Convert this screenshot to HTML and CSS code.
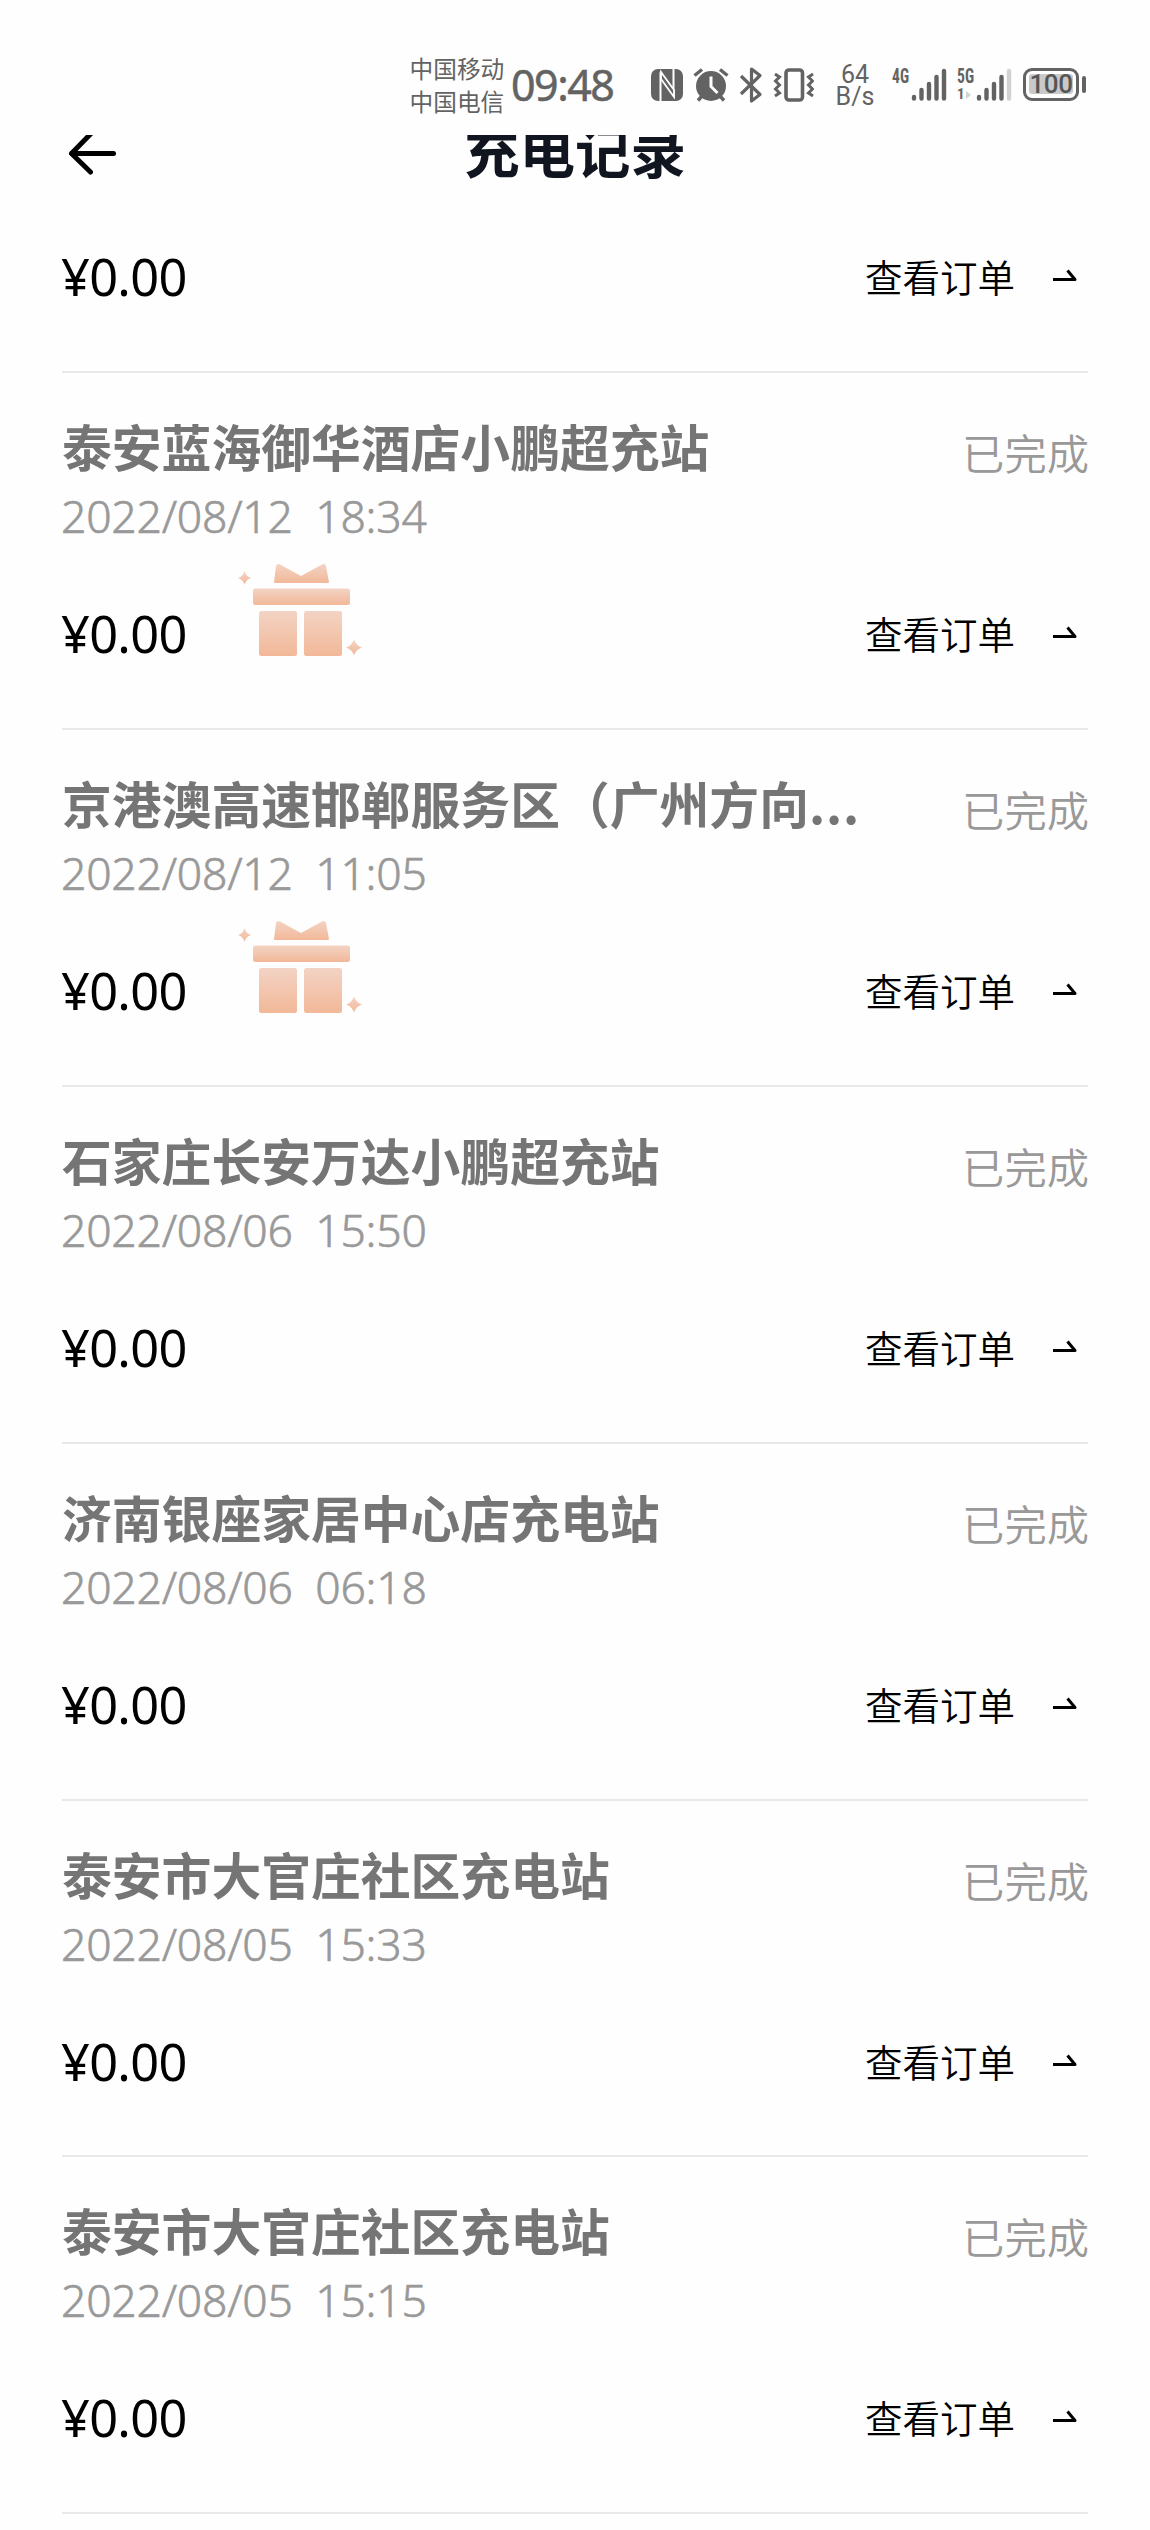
FILE: index.html
```html
<!DOCTYPE html>
<html lang="zh-CN">
<head>
<meta charset="utf-8">
<title>充电记录</title>
<link rel="stylesheet" href="styles.css">
</head>
<body>
<svg class="defs" width="0" height="0" aria-hidden="true">
  <defs>
    <linearGradient id="peach" x1="0" y1="0" x2="0" y2="1">
      <stop offset="0" stop-color="#f3d3c4"/>
      <stop offset="1" stop-color="#f2b898"/>
    </linearGradient>
    <symbol id="gift" viewBox="0 0 128 98">
      <g fill="url(#peach)">
        <path d="M40 6Q41 3 44 4.500L65 16L86 4.500Q89 3 90 6L93 22Q93 23 92 23H39Q38 23 38 22Z"/>
        <rect x="17" y="28.500" width="97" height="16.500" rx="2.500"/>
        <rect x="23" y="51" width="38" height="45" rx="2.500"/>
        <rect x="68" y="51" width="38" height="45" rx="2.500"/>
        <path d="M8.500 11Q10 16.500 15 18Q10 19.500 8.500 25Q7 19.500 2 18Q7 16.500 8.500 11Z"/>
        <path d="M118 79.500Q120 85.500 126 87.500Q120 89.500 118 95.500Q116 89.500 110 87.500Q116 85.500 118 79.500Z"/>
      </g>
    </symbol>
    <symbol id="go" viewBox="0 0 24 14">
      <path d="M0 10.500H22L14.500 1.500" fill="none" stroke="#000" stroke-width="3" stroke-linejoin="round"/>
    </symbol>
  </defs>
</svg>

<header class="status-bar">
  <div class="carriers"><span>中国移动</span><span>中国电信</span></div>
  <div class="clock">09:48</div>
  <svg class="icons" width="164" height="40" viewBox="650 65 164 40" fill="none" stroke="#636363">
    <rect x="651" y="69" width="32" height="32" rx="7" fill="#636363" stroke="none"/>
    <path d="M660.500 101V75L673.500 95V69" stroke="#fff" stroke-width="2"/>
    <path d="M661 72L674 90V97L661 79Z" fill="#636363" stroke="#fff" stroke-width="1.800"/>
    <circle cx="711" cy="86" r="15" fill="#636363" stroke="none"/>
    <path d="M694.500 75.500L702 69.500M727.500 75.500L720 69.500M702 96L698 100.500M720 96L724 100.500" stroke-width="3.400"/>
    <path d="M711 76.500V86.500L717.500 93" stroke="#fff" stroke-width="3"/>
    <path d="M741 76L760 94.500L751.500 101V69L760 75.500L741 94" stroke-width="3.200" stroke-linejoin="round"/>
    <rect x="786" y="70" width="16.500" height="30" rx="3" stroke-width="3.600"/>
    <path d="M775 74L779.500 77L775.500 81L779.500 85L775.500 89L779.500 93L775 96M813 74L808.500 77L812.500 81L808.500 85L812.500 89L808.500 93L813 96" stroke-width="3"/>
  </svg>
  <div class="speed"><span>64</span><span>B/s</span></div>
  <div class="signal">
    <div class="net"><span>4G</span></div>
    <svg width="36" height="34" viewBox="0 0 36 34" stroke="#636363" stroke-width="4.400" stroke-linecap="round">
      <path d="M3 29V30.500M10.500 22V30.500M18 16V30.500M25.500 9V30.500M33 3V30.500"/>
    </svg>
  </div>
  <div class="signal second">
    <div class="net"><span>5G</span><small>1<i></i></small></div>
    <svg width="36" height="34" viewBox="0 0 36 34" stroke="#636363" stroke-width="4.400" stroke-linecap="round">
      <path d="M3 29V30.500M10.500 22V30.500M18 16V30.500M25.500 9V30.500"/>
      <path d="M33 3V30.500" stroke="#d2d2d2"/>
    </svg>
  </div>
  <div class="battery"><span>100</span></div>
  <i class="battery-nub"></i>
</header>

<nav class="title-bar">
  <svg class="back" width="50" height="44" viewBox="0 0 50 44" fill="none" stroke="#000" stroke-width="5" stroke-linecap="round" stroke-linejoin="round">
    <path d="M24 2.500L4.500 22.500L23.500 41" />
    <path d="M5 22.500H46.500"/>
  </svg>
  <h1>充电记录</h1>
</nav>

<main class="records">
  <article class="record partial">
    <div class="foot"><b class="amount">¥0.00</b><a class="detail">查看订单<svg width="24" height="14"><use href="#go"/></svg></a></div>
  </article>
  <article class="record">
    <div class="head"><h2>泰安蓝海御华酒店小鹏超充站</h2><span class="state">已完成</span></div>
    <time>2022/08/12&nbsp; 18:34</time>
    <div class="foot"><b class="amount">¥0.00</b><svg class="gift" width="128" height="98"><use href="#gift"/></svg><a class="detail">查看订单<svg width="24" height="14"><use href="#go"/></svg></a></div>
  </article>
  <article class="record">
    <div class="head"><h2>京港澳高速邯郸服务区（广州方向<span class="dots">...</span></h2><span class="state">已完成</span></div>
    <time>2022/08/12&nbsp; 11:05</time>
    <div class="foot"><b class="amount">¥0.00</b><svg class="gift" width="128" height="98"><use href="#gift"/></svg><a class="detail">查看订单<svg width="24" height="14"><use href="#go"/></svg></a></div>
  </article>
  <article class="record">
    <div class="head"><h2>石家庄长安万达小鹏超充站</h2><span class="state">已完成</span></div>
    <time>2022/08/06&nbsp; 15:50</time>
    <div class="foot"><b class="amount">¥0.00</b><a class="detail">查看订单<svg width="24" height="14"><use href="#go"/></svg></a></div>
  </article>
  <article class="record">
    <div class="head"><h2>济南银座家居中心店充电站</h2><span class="state">已完成</span></div>
    <time>2022/08/06&nbsp; 06:18</time>
    <div class="foot"><b class="amount">¥0.00</b><a class="detail">查看订单<svg width="24" height="14"><use href="#go"/></svg></a></div>
  </article>
  <article class="record">
    <div class="head"><h2>泰安市大官庄社区充电站</h2><span class="state">已完成</span></div>
    <time>2022/08/05&nbsp; 15:33</time>
    <div class="foot"><b class="amount">¥0.00</b><a class="detail">查看订单<svg width="24" height="14"><use href="#go"/></svg></a></div>
  </article>
  <article class="record">
    <div class="head"><h2>泰安市大官庄社区充电站</h2><span class="state">已完成</span></div>
    <time>2022/08/05&nbsp; 15:15</time>
    <div class="foot"><b class="amount">¥0.00</b><a class="detail">查看订单<svg width="24" height="14"><use href="#go"/></svg></a></div>
  </article>
</main>
</body>
</html>
```

FILE: styles.css
```css
* { box-sizing: border-box; }

body {
  margin: 0;
  width: 1150px;
  height: 2530px;
  overflow: hidden;
  background: #fefefe;
  color: #000;
  font-family: "Noto Sans CJK SC", sans-serif;
}

h1, h2 { margin: 0; }
svg { display: block; flex: none; }
.defs { position: absolute; }

/* system status bar */
.status-bar {
  display: flex;
  align-items: flex-start;
  height: 135px;
  padding: 52px 0 0 409.500px;
  color: #636363;
}

.carriers {
  display: flex;
  flex-direction: column;
  width: 101.500px;
  font-size: 23.700px;
  line-height: 32.500px;
  white-space: nowrap;
}

.clock {
  width: 139px;
  margin-top: 8px;
  font: 400 43px/50px "Noto Sans", sans-serif;
  letter-spacing: -1.500px;
  -webkit-text-stroke: .5px #636363;
}

.icons { margin-top: 13px; }

.speed {
  display: flex;
  flex-direction: column;
  align-items: center;
  width: 40px;
  margin: 12px 0 0 21px;
  font: 400 25px/22px Roboto, sans-serif;
}

.signal {
  display: flex;
  margin: 16px 0 0 17px;
}

.signal.second { margin-left: 10px; }

.net {
  display: flex;
  flex-direction: column;
  width: 19px;
  white-space: nowrap;
  font: 700 20px/16px "Roboto Condensed", Roboto, sans-serif;
}

.net span {
  transform: scaleX(.78);
  transform-origin: left;
}

.net small {
  display: flex;
  align-items: center;
  gap: 1px;
  font-size: 15px;
  line-height: 21px;
}

.net i {
  border-left: 5px solid #d2d2d2;
  border-top: 4px solid transparent;
  border-bottom: 4px solid transparent;
}

.battery {
  width: 56px;
  height: 33px;
  margin: 16px 0 0 11px;
  padding: 3px;
  border: 3.500px solid #636363;
  border-radius: 9px;
}

.battery span {
  display: block;
  height: 20px;
  border-radius: 3px;
  background: #c9c9c9;
  color: #555;
  text-align: center;
  font: 500 26px/21px Roboto, sans-serif;
  letter-spacing: -.5px;
}

.battery-nub {
  width: 4px;
  height: 17px;
  margin: 24px 0 0 3px;
  border-radius: 2px;
  background: #636363;
}

/* page title, its top edge tucked beneath the status bar */
.title-bar {
  display: grid;
  grid-template-columns: 1fr auto 1fr;
  align-items: start;
  height: 93px;
  padding: 0 67px;
  overflow: hidden;
}

.back { margin-top: -4.500px; }

.title-bar h1 {
  height: 80px;
  margin-top: -26px;
  color: #10151f;
  font-size: 55.500px;
  line-height: 80px;
  font-weight: 700;
}

/* charging records */
.records { padding: 0 62px; }

.record {
  height: 356.900px;
  padding-top: 42px;
  border-bottom: 2px solid #e8e8e8;
}

.record.partial {
  height: 145px;
  padding-top: 0;
}

.head {
  display: flex;
  justify-content: space-between;
  height: 60px;
}

.head h2 {
  color: #757575;
  font-size: 49.800px;
  line-height: 60px;
  font-weight: 700;
  white-space: nowrap;
}

.dots { letter-spacing: .8px; }

.state {
  margin-right: -1px;
  color: #999;
  font-size: 42.300px;
  font-weight: 350;
  line-height: 74px;
}

.record time {
  display: block;
  margin: 16px 0 0 -1px;
  color: #999;
  font: 300 44.500px/50px "Noto Sans", sans-serif;
  letter-spacing: -.25px;
  -webkit-text-stroke: .6px #999;
}

.foot {
  display: flex;
  align-items: center;
  height: 100px;
  margin-top: 44px;
}

.partial .foot { margin-top: 0; }

.amount {
  width: 175px;
  margin: -2px 0 0 -1px;
  font: 400 50.500px/60px "Noto Sans", sans-serif;
  letter-spacing: -.7px;
}

.gift { margin-bottom: 52px; }

.detail {
  display: flex;
  align-items: center;
  gap: 38px;
  margin: -4px 0 0 auto;
  padding-right: 11px;
  font-size: 37.500px;
  font-weight: 350;
  line-height: 50px;
}
```
